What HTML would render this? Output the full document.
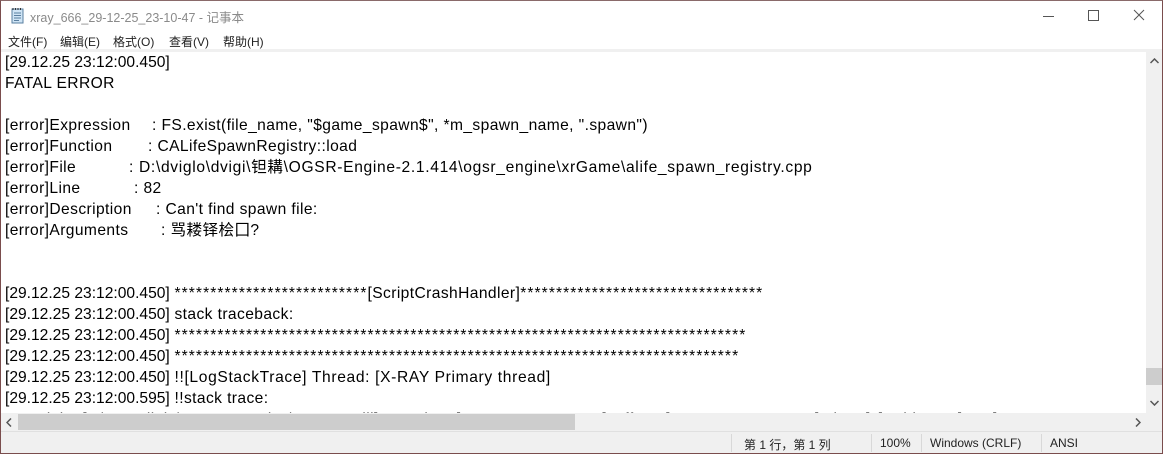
<!DOCTYPE html>
<html><head><meta charset="utf-8"><style>
*{margin:0;padding:0;box-sizing:border-box}
body{width:1163px;height:454px;overflow:hidden;background:#fff;font-family:"Liberation Sans","Noto Sans CJK SC",sans-serif;position:relative}
.frame{position:absolute;left:0;top:0;width:1163px;height:454px;border:1px solid #7a4d4d;border-top-color:#8a6a6a}
.title{position:absolute;left:30px;top:7px;font-size:12.5px;color:#8a8a8a}
.menu{position:absolute;top:33px;font-size:12px;color:#222}
.menubar{position:absolute;left:1px;top:29px;width:1161px;height:20px;background:#fff}
.sep{position:absolute;left:1px;top:49px;width:1161px;height:3px;background:#f0f0f0}
.ed{position:absolute;left:1px;top:52px;width:1145px;height:361px;overflow:hidden;font-size:15.6px;color:#000}
.l{position:absolute;left:4px;white-space:pre;line-height:21px;letter-spacing:.4px}
.ts{letter-spacing:0}
.a{position:absolute;white-space:pre}
.st{letter-spacing:1.08px}
.vs{position:absolute;left:1146px;top:52px;width:16px;height:361px;background:#f0f0f0}
.hs{position:absolute;left:1px;top:413px;width:1145px;height:18px;background:#f0f0f0}
.corner{position:absolute;left:1146px;top:413px;width:16px;height:18px;background:#f0f0f0}
.sb{position:absolute;left:1px;top:431px;width:1161px;height:22px;background:#f0f0f0;border-top:1px solid #e0e0e0;font-size:12px;color:#222}
.sb span{position:absolute;top:4px}
.dv{position:absolute;top:2px;width:1px;height:18px;background:#d8d8d8}
</style></head><body>
<div class="frame"></div>
<svg style="position:absolute;left:10px;top:7px" width="16" height="17" viewBox="0 0 16 17"><rect x="2" y="2" width="11" height="14" fill="#cfe4f5" stroke="#5a7fa0"/><path d="M4 6h7M4 8.5h7M4 11h7M4 13.5h5" stroke="#5a7fa0"/><path d="M3 1v2M5.5 1v2M8 1v2M10.5 1v2" stroke="#333"/></svg>
<div class="title">xray_666_29-12-25_23-10-47 - 记事本</div>
<svg style="position:absolute;left:1040px;top:8px" width="115" height="16"><path d="M3 8.5h11" stroke="#555"/><rect x="48.5" y="2.5" width="10" height="10" fill="none" stroke="#555"/><path d="M94 2l10 10M104 2l-10 10" stroke="#555"/></svg>
<div class="menubar"></div>
<div class="menu" style="left:8px">文件(F)</div>
<div class="menu" style="left:60px">编辑(E)</div>
<div class="menu" style="left:113px">格式(O)</div>
<div class="menu" style="left:169px">查看(V)</div>
<div class="menu" style="left:223px">帮助(H)</div>
<div class="sep"></div>
<div class="ed">
<div class="l" style="top:0"><span class="ts">[29.12.25 23:12:00.450]</span></div>
<div class="l" style="top:21px">FATAL ERROR</div>
<div class="l" style="top:63px">[error]Expression<span class="a" style="left:147px">: FS.exist(file_name, "$game_spawn$", *m_spawn_name, ".spawn")</span></div>
<div class="l" style="top:84px">[error]Function<span class="a" style="left:143px">: CALifeSpawnRegistry::load</span></div>
<div class="l" style="top:105px">[error]File<span class="a" style="left:124px;letter-spacing:.67px">: D:\dviglo\dvigi\钽耩\OGSR-Engine-2.1.414\ogsr_engine\xrGame\alife_spawn_registry.cpp</span></div>
<div class="l" style="top:126px">[error]Line<span class="a" style="left:129px">: 82</span></div>
<div class="l" style="top:147px">[error]Description<span class="a" style="left:151px">: Can't find spawn file:</span></div>
<div class="l" style="top:168px">[error]Arguments<span class="a" style="left:156px">: 骂耧铎桧囗?</span></div>
<div class="l" style="top:231px"><span class="ts">[29.12.25 23:12:00.450]</span> <span class="st">***************************</span>[ScriptCrashHandler]<span class="st">**********************************</span></div>
<div class="l" style="top:252px"><span class="ts">[29.12.25 23:12:00.450]</span> stack traceback:</div>
<div class="l" style="top:273px"><span class="ts">[29.12.25 23:12:00.450]</span> <span class="st">********************************************************************************</span></div>
<div class="l" style="top:294px"><span class="ts">[29.12.25 23:12:00.450]</span> <span class="st">*******************************************************************************</span></div>
<div class="l" style="top:315px"><span class="ts">[29.12.25 23:12:00.450]</span> <span style="letter-spacing:.65px">!![LogStackTrace] Thread: [X-RAY Primary thread]</span></div>
<div class="l" style="top:336px"><span class="ts">[29.12.25 23:12:00.595]</span> !!stack trace:</div>
<div class="l" style="top:357px">!! Module: [F:\Moonlight\OGSR_Engine\xrGame.dll] Function: [LOGSTACKTRACE] Offset: [0000000000012345] Line: [0] Address: [0x...]</div>
</div>
<div class="vs"><svg style="position:absolute;left:4px;top:6px" width="9" height="6"><path d="M0.5 5L4.5 1 8.5 5" stroke="#555" stroke-width="1.5" fill="none"/></svg>
<div style="position:absolute;left:0;top:316px;width:16px;height:17px;background:#cdcdcd"></div>
<svg style="position:absolute;left:4px;top:348px" width="9" height="6"><path d="M0.5 1L4.5 5 8.5 1" stroke="#555" stroke-width="1.5" fill="none"/></svg></div>
<div class="hs"><svg style="position:absolute;left:5px;top:5px" width="6" height="9"><path d="M5 0.5L1 4.5 5 8.5" stroke="#555" stroke-width="1.5" fill="none"/></svg>
<div style="position:absolute;left:17px;top:1px;width:557px;height:16px;background:#cdcdcd"></div>
<svg style="position:absolute;left:1134px;top:5px" width="6" height="9"><path d="M1 0.5L5 4.5 1 8.5" stroke="#555" stroke-width="1.5" fill="none"/></svg></div>
<div class="corner"></div>
<div class="sb">
<div class="dv" style="left:730px"></div><div class="dv" style="left:870px"></div><div class="dv" style="left:920px"></div><div class="dv" style="left:1040px"></div>
<span style="left:743px">第 1 行，第 1 列</span>
<span style="left:879px">100%</span>
<span style="left:929px">Windows (CRLF)</span>
<span style="left:1049px">ANSI</span>
</div>
</body></html>
